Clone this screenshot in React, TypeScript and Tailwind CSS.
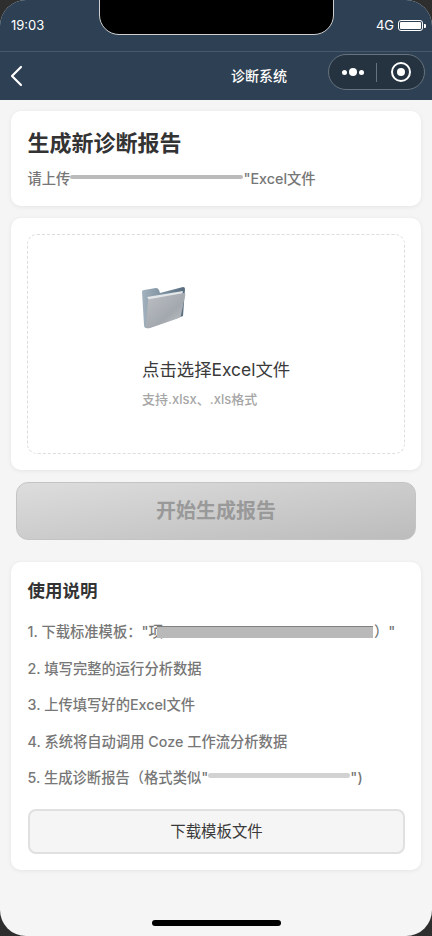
import React from "react";

const font = { fontFamily: '"Inter","Noto Sans CJK SC",sans-serif' };

function Folder() {
  return (
    <svg width="46" height="44" viewBox="0 0 46 44">
      <defs>
        <linearGradient id="fb" x1="0" y1="0" x2="1" y2="0">
          <stop offset="0" stopColor="#a3b2be" />
          <stop offset="1" stopColor="#566c7e" />
        </linearGradient>
        <linearGradient id="ff" x1="0" y1="0" x2="1" y2="1">
          <stop offset="0" stopColor="#bcc0c5" />
          <stop offset="0.6" stopColor="#a3a8ae" />
          <stop offset="1" stopColor="#c4c8cc" />
        </linearGradient>
      </defs>
      <path d="M0 5 Q0 3 2 3 L14 1 Q16 1 17 3 L18 6 L41 0 Q43 0 43 2 L41 29 L7 41 Q2 42 2 38 Z" fill="url(#fb)" />
      <path d="M5 10 L41 4 L40 8 L7 13 Z" fill="#e3e6e9" />
      <path d="M6 14 Q6 12 8 12 L42 6 Q44 6 43 9 L39 28 Q39 30 37 31 L8 41 Q4 42 4 38 Z" fill="url(#ff)" />
    </svg>
  );
}

function Step({ children }: { children: React.ReactNode }) {
  return <div className="h-[20px] flex items-center text-[14.3px] leading-[20px] font-medium text-[#777777] whitespace-nowrap">{children}</div>;
}

export default function App() {
  return (
    <div className="w-[432px] h-[936px] bg-[#2e2e2e] overflow-hidden" style={font}>
      <div className="relative w-[432px] h-[936px] bg-[#f5f5f5] rounded-[26px] overflow-hidden flex flex-col">
        <div className="absolute left-[99px] top-[-1px] w-[235px] h-[36px] bg-black border border-[#cfcfcf] rounded-b-[20px]" />

        <div className="bg-[#2e4053] text-white">
          <div className="h-[52px] border-b border-[#475a6c] flex items-start justify-between pl-[11px] pr-[6px] pt-[17px]">
            <span className="text-[13px] leading-[17px]">19:03</span>
            <div className="flex items-center gap-[4px]">
              <span className="text-[13px] leading-[17px]">4G</span>
              <div className="flex items-center">
                <div className="w-[25px] h-[11px] border border-white rounded-[3px] p-[1px]">
                  <div className="w-full h-full bg-white rounded-[1px]" />
                </div>
                <div className="w-[2px] h-[4px] bg-white rounded-r-[1px] ml-[1px]" />
              </div>
            </div>
          </div>
          <div className="h-[48px] flex items-center pl-[9px]">
            <svg width="16" height="24" viewBox="0 0 16 24" fill="none" stroke="white" strokeWidth="2.2" strokeLinecap="round" strokeLinejoin="round">
              <path d="M12 3 L3 12 L12 21" />
            </svg>
            <span className="w-[57px] ml-[206px] text-[14px] font-medium leading-[20px] whitespace-nowrap">诊断系统</span>
            <div className="ml-[40px] w-[97px] h-[36px] rounded-full bg-[#24333f] border border-[#66737f] flex items-center mt-[-8px]">
              <div className="w-[47px] flex items-center justify-center gap-[2px]">
                <span className="w-[5px] h-[5px] rounded-full bg-white" />
                <span className="w-[8px] h-[8px] rounded-full bg-white" />
                <span className="w-[5px] h-[5px] rounded-full bg-white" />
              </div>
              <div className="w-px h-[19px] bg-[#66737f]" />
              <div className="flex-1 flex items-center justify-center">
                <div className="w-[20px] h-[20px] rounded-full border-[2.5px] border-white flex items-center justify-center">
                  <span className="w-[8px] h-[8px] rounded-full bg-white" />
                </div>
              </div>
            </div>
          </div>
        </div>

        <div className="flex flex-col px-[11px] pt-[11px]">
          <div className="h-[95px] bg-white rounded-[10px] shadow-[0_1px_5px_rgba(0,0,0,0.07)] pl-[16.5px] pr-[17px] pt-[17px]">
            <div className="text-[22px] leading-[30px] font-bold text-[#333333]">生成新诊断报告</div>
            <div className="mt-[11px] h-[20px] text-[14.3px] leading-[20px] font-medium text-[#777777] flex items-center whitespace-nowrap">
              请上传
              <span className="inline-block w-[173px] h-[4px] mt-[-4px] bg-[#bbbbbb] rounded-full" />
              "Excel文件
            </div>
          </div>

          <div className="mt-[12px] h-[252px] bg-white rounded-[10px] shadow-[0_1px_5px_rgba(0,0,0,0.07)] p-[16px]">
            <div className="h-[220px] border border-dashed border-[#dddddd] rounded-[10px] pl-[114px] pt-[52px]">
              <Folder />
              <div className="mt-[27px] text-[17.4px] leading-[24px] text-[#3a3a3a] whitespace-nowrap">点击选择Excel文件</div>
              <div className="mt-[8px] text-[13px] leading-[18px] font-medium text-[#a6a6a6] whitespace-nowrap">支持.xlsx、.xls格式</div>
            </div>
          </div>

          <div className="mt-[12px] mx-[5px] h-[58px] rounded-[12px] border border-[#c4c4c4] bg-gradient-to-br from-[#dddddd] to-[#bcbcbc] flex items-center justify-center text-[20px] font-bold text-[#999999]">
            开始生成报告
          </div>

          <div className="mt-[22px] h-[308px] bg-white rounded-[10px] shadow-[0_1px_5px_rgba(0,0,0,0.07)] pl-[16.5px] pr-[16px] pt-[17px]">
            <div className="text-[17.5px] leading-[24px] font-bold text-[#333333]">使用说明</div>
            <div className="mt-[19px] flex flex-col gap-[16.5px]">
              <Step>
                1. 下载标准模板："项
                <span className="inline-block w-[216px] h-[12px] ml-[-6px] bg-[#b9b9b9] border-t border-[#808080]" />
                <span className="ml-[1px]">）"</span>
              </Step>
              <Step>2. 填写完整的运行分析数据</Step>
              <Step>3. 上传填写好的Excel文件</Step>
              <Step>4. 系统将自动调用 Coze 工作流分析数据</Step>
              <Step>
                5. 生成诊断报告（格式类似"
                <span className="inline-block w-[142px] h-[5px] mt-[-5px] bg-[#d2d2d2] rounded-full" />
                ")
              </Step>
            </div>
            <div className="mt-[21px] h-[45px] ml-[0.5px] rounded-[8px] border-2 border-[#e0e0e0] bg-[#f5f5f5] flex items-center justify-center text-[15.4px] text-[#3a3a3a]">
              下载模板文件
            </div>
          </div>
        </div>

        <div className="absolute left-[152px] top-[920px] w-[129px] h-[6px] rounded-full bg-black" />
      </div>
    </div>
  );
}
